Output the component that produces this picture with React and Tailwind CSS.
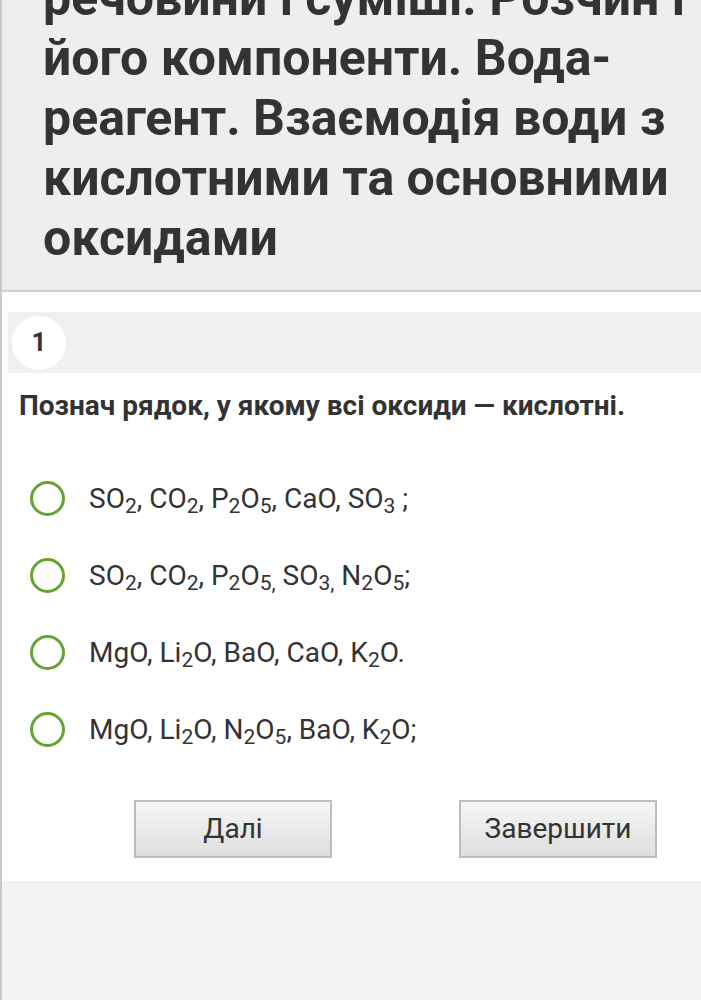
import React from "react";

const F = { fontFamily: "Roboto, 'Noto Sans', sans-serif" };

function Radio() {
  return <span className="block w-[35px] h-[35px] rounded-full border-[3px] border-[#62a531] bg-white shrink-0" />;
}

function Option({ children }) {
  return (
    <div className="flex items-center h-[77px] pl-[28px]">
      <Radio />
      <div className="ml-[24px] text-[28px] text-[#333] leading-none">{children}</div>
    </div>
  );
}

export default function App() {
  return (
    <div className="w-[701px] h-[1000px] overflow-hidden border-l-2 border-[#c9c9c9] bg-white flex flex-col" style={F}>
      <div className="bg-[#eeeeee] border-b-2 border-[#cfcfcf] pl-[41px] pb-[22px]">
        <div className="mt-[-32px] text-[50px] leading-[60px] font-bold text-[#333] whitespace-nowrap">
          <div>речовини і суміші. Розчин і</div>
          <div>його компоненти. Вода-</div>
          <div>реагент. Взаємодія води з</div>
          <div>кислотними та основними</div>
          <div>оксидами</div>
        </div>
      </div>
      <div className="pt-[20px] pl-[6px]">
        <div className="h-[61px] bg-[#f0f0f0] flex items-center pl-[4px]">
          <div className="w-[54px] h-[54px] rounded-full bg-white flex items-center justify-center text-[26px] font-bold text-[#333]">1</div>
        </div>
        <div className="pl-[11px] pt-[16px] text-[28px] font-bold text-[#333] leading-[34px]">
          Познач рядок, у якому всі оксиди — кислотні.
        </div>
        <div className="mt-[37px]">
          <div className="-ml-[6px]">
            <Option>SO<sub>2</sub>, CO<sub>2</sub>, P<sub>2</sub>O<sub>5</sub>, CaO, SO<sub>3</sub> ;</Option>
            <Option>SO<sub>2</sub>, CO<sub>2</sub>, P<sub>2</sub>O<sub>5,</sub> SO<sub>3,</sub> N<sub>2</sub>O<sub>5</sub>;</Option>
            <Option>MgO, Li<sub>2</sub>O, BaO, CaO, K<sub>2</sub>O.</Option>
            <Option>MgO, Li<sub>2</sub>O, N<sub>2</sub>O<sub>5</sub>, BaO, K<sub>2</sub>O;</Option>
          </div>
        </div>
      </div>
      <div className="flex justify-between pl-[132px] pr-[44px] mt-[32px]">
        <button className="w-[198px] h-[58px] border-2 border-[#bdbdbd] bg-gradient-to-b from-[#f6f6f6] to-[#dedede] text-[28px] text-[#333]">Далі</button>
        <button className="w-[198px] h-[58px] border-2 border-[#bdbdbd] bg-gradient-to-b from-[#f6f6f6] to-[#dedede] text-[28px] text-[#333]">Завершити</button>
      </div>
      <div className="mt-[23px] flex-1 bg-[#f2f2f2]" />
    </div>
  );
}
